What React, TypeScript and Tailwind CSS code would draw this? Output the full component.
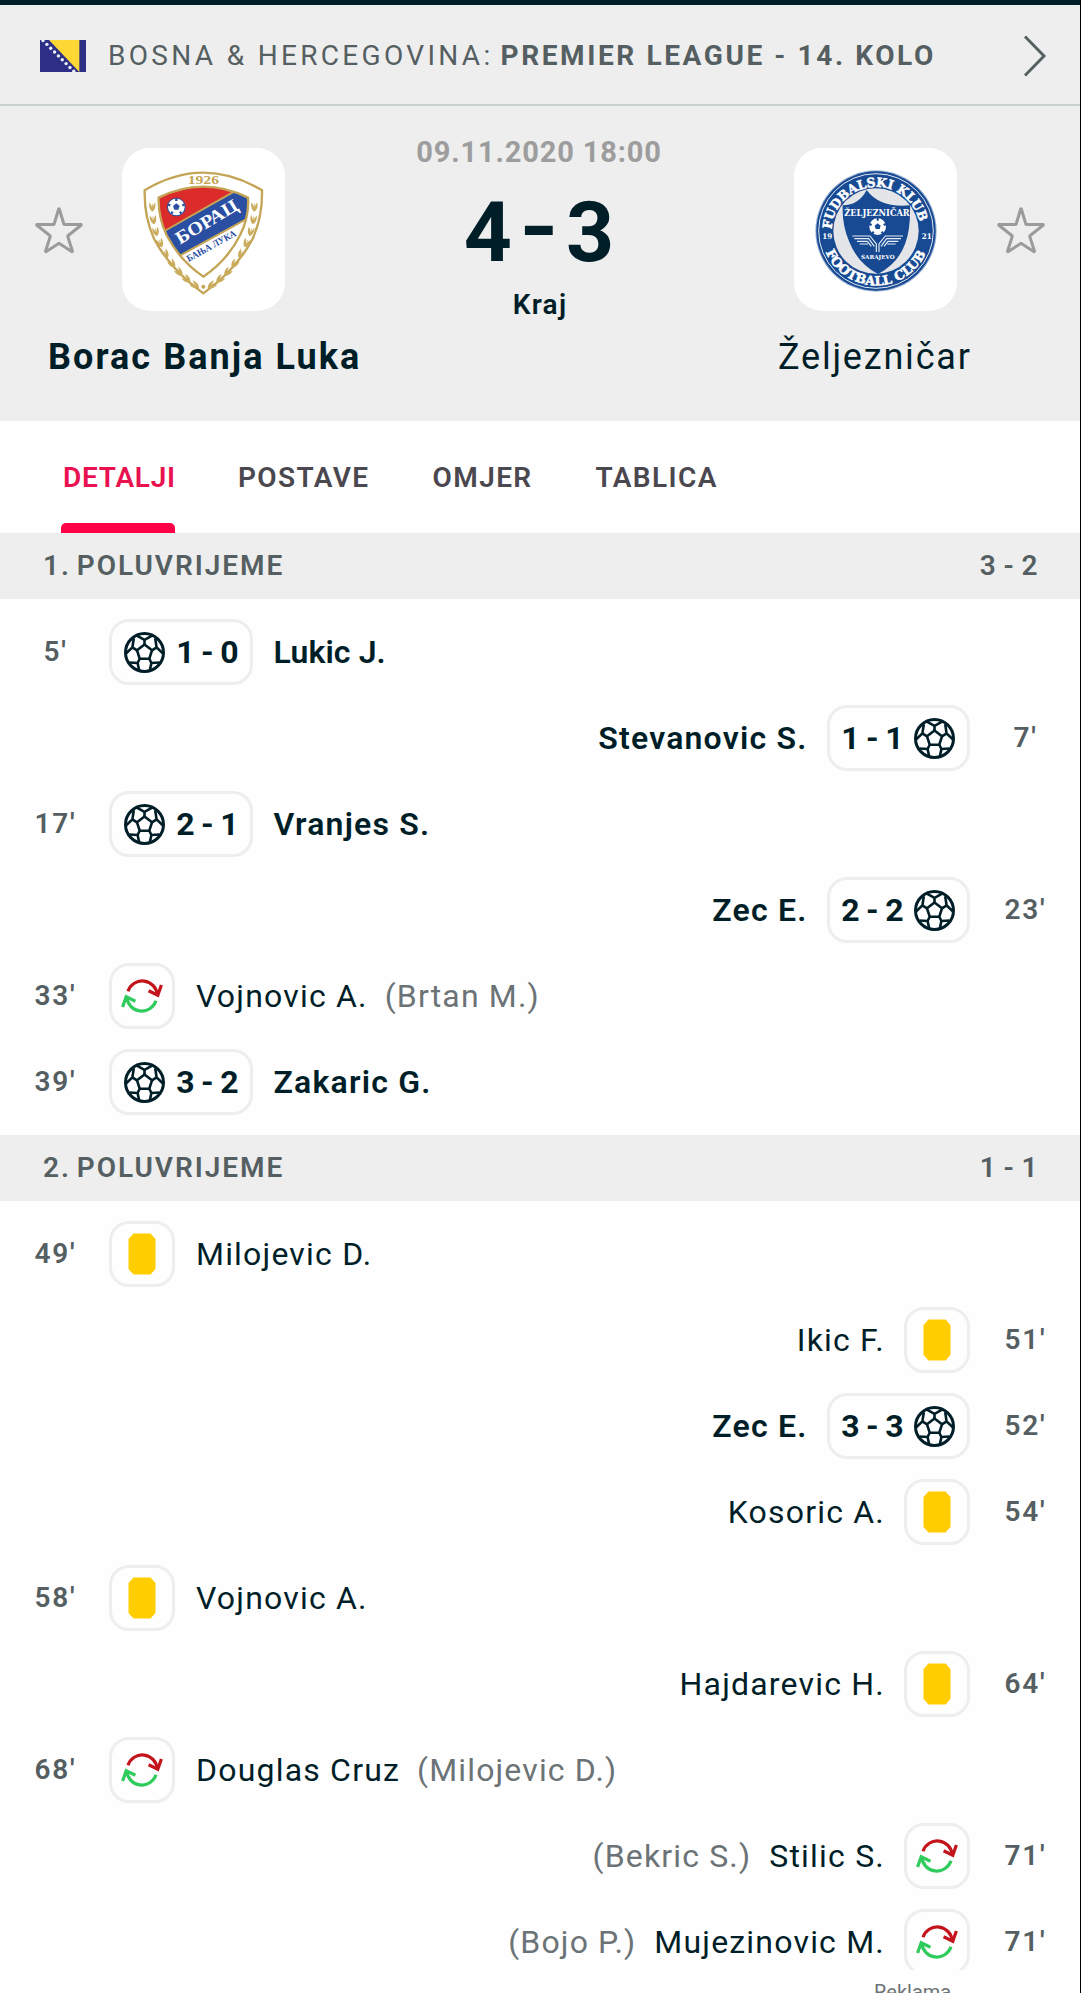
import type { ReactNode } from "react";

type MatchEvent = {
  minute: string;
  side: "home" | "away";
  kind: "goal" | "card" | "sub";
  player: string;
  score?: string;
  playerOut?: string;
  compact?: boolean;
};

const firstHalf: MatchEvent[] = [
  { minute: "5'", side: "home", kind: "goal", score: "1 - 0", player: "Lukic J.", compact: true },
  { minute: "7'", side: "away", kind: "goal", score: "1 - 1", player: "Stevanovic S." },
  { minute: "17'", side: "home", kind: "goal", score: "2 - 1", player: "Vranjes S." },
  { minute: "23'", side: "away", kind: "goal", score: "2 - 2", player: "Zec E." },
  { minute: "33'", side: "home", kind: "sub", player: "Vojnovic A.", playerOut: "Brtan M." },
  { minute: "39'", side: "home", kind: "goal", score: "3 - 2", player: "Zakaric G." },
];

const secondHalf: MatchEvent[] = [
  { minute: "49'", side: "home", kind: "card", player: "Milojevic D." },
  { minute: "51'", side: "away", kind: "card", player: "Ikic F." },
  { minute: "52'", side: "away", kind: "goal", score: "3 - 3", player: "Zec E." },
  { minute: "54'", side: "away", kind: "card", player: "Kosoric A." },
  { minute: "58'", side: "home", kind: "card", player: "Vojnovic A." },
  { minute: "64'", side: "away", kind: "card", player: "Hajdarevic H." },
  { minute: "68'", side: "home", kind: "sub", player: "Douglas Cruz", playerOut: "Milojevic D." },
  { minute: "71'", side: "away", kind: "sub", player: "Stilic S.", playerOut: "Bekric S." },
  { minute: "71'", side: "away", kind: "sub", player: "Mujezinovic M.", playerOut: "Bojo P." },
];

const tabs = ["DETALJI", "POSTAVE", "OMJER", "TABLICA"];

function Flag() {
  const stars = [0, 1, 2, 3, 4, 5, 6, 7, 8];
  return (
    <svg viewBox="0 0 46 32" className="h-8 w-[46px] shrink-0">
      <rect width="46" height="32" fill="#2c2f85" />
      <path d="M9 0H39.3V32Z" fill="#fdd835" />
      {stars.map((i) => (
        <circle key={i} cx={3 + i * 3.85} cy={0.5 + i * 3.85} r="1.7" fill="#eef0fa" />
      ))}
    </svg>
  );
}

function Star() {
  return (
    <svg viewBox="0 0 50 50" className="size-[50px] shrink-0" fill="none" stroke="#9b9b9b" strokeWidth="3" strokeLinejoin="bevel">
      <path d="M25 3L30 19.5H48L33.6 31L38.8 47.3L25 38.2L11.2 47.3L16.4 31L2 19.5H20Z" />
    </svg>
  );
}

function Ball() {
  return (
    <svg viewBox="0 0 41 41" className="size-[41px] shrink-0" fill="none" stroke="#001e28" strokeWidth="2.6" strokeLinejoin="round">
      <circle cx="20.5" cy="20.5" r="19" strokeWidth="3" />
      <path d="M20.5 12.5L28 18.3L25.3 26.7H15.7L13 18.3Z" />
      <path d="M20.5 12.5V7.8M20.5 7.8L12.4 3.4M20.5 7.8L28.6 3.4" />
      <path d="M13 18.3L8.4 15.4L9.8 6.3M8.4 15.4L2 21.5M28 18.3L32.6 15.4L31.2 6.3M32.6 15.4L39 21.5" />
      <path d="M15.7 26.7L13.6 31L15.2 38.5M13.6 31L5.4 30.5M25.3 26.7L27.4 31L25.8 38.5M27.4 31L35.6 30.5" />
    </svg>
  );
}

function Substitution() {
  return (
    <svg viewBox="0 0 42 34" className="h-[34px] w-[42px]" fill="none" strokeWidth="3.2">
      <g stroke="#c4141b">
        <path d="M7 12.2A15 15 0 0 1 36.2 16" />
        <path d="M27.6 11.8L36.8 16.2L40.4 6" />
      </g>
      <g stroke="#2fcb5c">
        <path d="M35 21.8A15 15 0 0 1 5.8 18" />
        <path d="M14.4 22.2L5.2 17.8L1.6 28" />
      </g>
    </svg>
  );
}

function YellowCard() {
  return (
    <svg viewBox="0 0 28 42" className="h-[42px] w-7">
      <path d="M5.5 0.5H22.5L27.5 6V36L22.5 41.5H5.5L0.5 36V6Z" fill="#ffcd00" />
    </svg>
  );
}

function BoracCrest() {
  const leaves = [
    [49, 142, 0],
    [52, 180, -8],
    [60, 216, -14],
    [73, 250, -22],
    [89, 282, -30],
    [109, 312, -36],
    [130, 337, -42],
    [153, 358, -48],
    [178, 376, -58],
  ];
  const wreath = leaves.map(([x, y, r]) => (
    <path
      key={y}
      transform={`translate(${x} ${y}) rotate(${r})`}
      d="M0 13Q-12 6 -9 -15Q-3 -8 -1 0V-11H1V0Q3 -8 9 -15Q12 6 0 13Z"
      fill="#c9ac5c"
    />
  ));
  return (
    <svg viewBox="0 0 408 420" className="h-[140px] w-[136px]">
      <defs>
        <clipPath id="borac-field">
          <path d="M202 80Q270 80 336 113Q340 170 312 226Q275 300 202 350Q130 300 92 226Q66 170 68 113Q134 80 202 80Z" />
        </clipPath>
      </defs>
      <path d="M202 38Q290 38 378 91Q380 170 350 236Q302 328 202 400Q102 328 54 236Q24 170 26 91Q114 38 202 38Z" fill="#fff" stroke="#c4a556" strokeWidth="7" />
      {wreath}
      <g transform="translate(404 0) scale(-1 1)">{wreath}</g>
      <circle cx="202" cy="380" r="6" fill="#c4a556" />
      <g clipPath="url(#borac-field)">
        <path d="M60 60H350V90L80 225H60Z" fill="#dc2b2b" />
        <path d="M80 216L306 88L350 110V167L126 290Z" fill="#2a4ea2" stroke="#c4a556" strokeWidth="6" />
      </g>
      <path d="M202 80Q270 80 336 113Q340 170 312 226Q275 300 202 350Q130 300 92 226Q66 170 68 113Q134 80 202 80Z" fill="none" stroke="#c4a556" strokeWidth="7" />
      <circle cx="121" cy="141" r="28" fill="#2a4ea2" />
      <circle cx="121" cy="141" r="25" fill="#fff" />
      <path d="M121 130L131 138L127 149H115L111 138Z" fill="#2a4ea2" />
      <path d="M121 115V123M146 134L139 136M136 161L132 155M106 161L110 155M96 134L103 136" stroke="#2a4ea2" strokeWidth="7" />
      <text x="202" y="71" textAnchor="middle" textLength="94" lengthAdjust="spacingAndGlyphs" fontSize="38" fontWeight="700" fill="#c4a556" className="font-['Liberation_Serif',serif]">
        1926
      </text>
      <text transform="translate(132 254) rotate(-31)" textLength="208" lengthAdjust="spacingAndGlyphs" fontSize="55" fontWeight="700" fill="#fff" className="font-['Liberation_Serif',serif]">
        БОРАЦ
      </text>
      <text transform="translate(158 306) rotate(-29)" textLength="165" lengthAdjust="spacingAndGlyphs" fontSize="29" fontWeight="700" fill="#2a4ea2" className="font-['Liberation_Serif',serif]">
        БАЊА ЛУКА
      </text>
    </svg>
  );
}

function ZeljoCrest() {
  return (
    <svg viewBox="0 0 408 408" className="size-[136px] font-['DejaVu_Serif',serif] font-bold" fill="#fff">
      <defs>
        <path id="zeljo-top" d="M72 224A133 133 0 1 1 336 224" />
        <path id="zeljo-bottom" d="M46 250A164 164 0 0 0 362 250" />
      </defs>
      <circle cx="204" cy="207" r="182" fill="#9fb4d6" />
      <circle cx="204" cy="207" r="179" fill="#174a93" />
      <circle cx="204" cy="207" r="172" fill="none" stroke="#dfe7f3" strokeWidth="3" />
      <circle cx="204" cy="207" r="128" fill="#e3e5e8" />
      <path d="M176 84Q215 138 306 130Q308 200 292 244Q270 305 210 336Q150 305 124 240Q102 190 104 130Q152 130 176 84Z" fill="#174a93" />
      <text fontSize="38" stroke="#fff" strokeWidth="1.5">
        <textPath href="#zeljo-top" startOffset="22" textLength="384" lengthAdjust="spacingAndGlyphs">
          FUDBALSKI KLUB
        </textPath>
      </text>
      <text fontSize="38" stroke="#fff" strokeWidth="1.5">
        <textPath href="#zeljo-bottom" startOffset="22" textLength="378" lengthAdjust="spacingAndGlyphs">
          FOOTBALL CLUB
        </textPath>
      </text>
      <text x="43" y="231" fontSize="23" textLength="30" lengthAdjust="spacingAndGlyphs">19</text>
      <text x="341" y="231" fontSize="23" textLength="30" lengthAdjust="spacingAndGlyphs">21</text>
      <text x="109" y="162" fontSize="27" textLength="196" lengthAdjust="spacingAndGlyphs">ŽELJEZNIČAR</text>
      <circle cx="209" cy="194" r="25" />
      <path d="M209 184L218 191L215 201H203L200 191Z" fill="#174a93" />
      <path d="M209 168V176M234 186L227 189M225 215L221 209M193 215L197 209M184 186L191 189" stroke="#174a93" strokeWidth="6" />
      <path
        d="M133 222H186L205 246V270M139 230H182L199 253M147 238H178L190 253M155 246H180M285 222H232L213 246V270M279 230H236L219 253M271 238H240L228 253M263 246H238M205 246V270M213 246V270"
        fill="none"
        stroke="#e9eef6"
        strokeWidth="3.5"
      />
      <text x="159" y="292" fontSize="17" textLength="101" lengthAdjust="spacingAndGlyphs">SARAJEVO</text>
    </svg>
  );
}

function CrestTile({ children }: { children: ReactNode }) {
  return <div className="flex size-[163px] shrink-0 items-center justify-center rounded-[28px] bg-white">{children}</div>;
}

function LeagueBar() {
  return (
    <div className="flex h-[101px] items-center border-b-2 border-[#ccd1d3] pl-[40px] pr-[33px] pt-[2px] text-[28px] text-[#555f62]">
      <Flag />
      <span className="ml-[22px] whitespace-pre tracking-[3.32px]">BOSNA &amp; HERCEGOVINA:</span>
      <span className="ml-[7px] whitespace-pre font-bold tracking-[2.6px]">PREMIER LEAGUE - 14. KOLO</span>
      <svg viewBox="0 0 24 42" className="ml-auto h-[42px] w-6" fill="none" stroke="currentColor" strokeWidth="2.9">
        <path d="M2 1.5L21 21L2 40.5" />
      </svg>
    </div>
  );
}

function MatchHeader() {
  return (
    <div className="grid h-[315px] grid-cols-[407px_1fr_409px] bg-[#eeeeee]">
      <div className="pt-[42px]">
        <div className="flex items-center pl-[34px]">
          <Star />
          <div className="ml-[38px]">
            <CrestTile>
              <BoracCrest />
            </CrestTile>
          </div>
        </div>
        <p className="mt-[22px] pl-[48px] text-[36px] font-bold leading-[48px] tracking-[2.05px]">Borac Banja Luka</p>
      </div>

      <div className="flex flex-col items-center pt-[26px]">
        <p className="whitespace-nowrap text-[29px] font-bold leading-10 tracking-[0.85px] text-[#9d9d9d]">09.11.2020 18:00</p>
        <div className="mt-[17px] flex items-center gap-[7px] text-[84px] font-bold leading-[88px]">
          <span>4</span>
          <span className="w-[40px] -translate-y-[5px] scale-x-120 text-center">-</span>
          <span>3</span>
        </div>
        <p className="mt-[8px] pl-[2px] text-[28px] font-semibold leading-10 tracking-[1.3px]">Kraj</p>
      </div>

      <div className="pt-[42px]">
        <div className="flex items-center pl-[123px]">
          <CrestTile>
            <ZeljoCrest />
          </CrestTile>
          <div className="ml-[39px]">
            <Star />
          </div>
        </div>
        <p className="mt-[22px] pl-[107px] text-[36px] leading-[48px] tracking-[1.8px]">Željezničar</p>
      </div>
    </div>
  );
}

function Tabs() {
  return (
    <nav className="flex h-[112px] gap-[63px] pl-[61px] text-[28px] font-semibold tracking-[1.4px] text-[#4a474e]">
      {tabs.map((tab, i) => (
        <div
          key={tab}
          className={
            i === 0
              ? "flex w-[114px] flex-col justify-between pl-[2px] tracking-[0.75px] text-[#e9114f]"
              : "flex flex-col justify-between"
          }
        >
          <span className="mt-[37px] leading-10">{tab}</span>
          {i === 0 ? <span className="-ml-[2px] h-[10px] rounded-t-[5px] bg-[#ff0046]" /> : null}
        </div>
      ))}
    </nav>
  );
}

function SectionHeader({ title, score }: { title: string; score: string }) {
  return (
    <div className="flex h-[66px] items-center justify-between bg-[#eeeeee] pl-[43px] pr-[42px] text-[28px] font-semibold text-[#555f62]">
      <span className="tracking-[1.95px] [word-spacing:-3px]">{title}</span>
      <span className="tracking-[0.4px]">{score}</span>
    </div>
  );
}

function IncidentBadge({ event }: { event: MatchEvent }) {
  const away = event.side === "away";
  if (event.kind === "goal") {
    return (
      <div
        className={[
          "flex h-[66px] w-[143.5px] shrink-0 items-center rounded-[20px] border-3 border-[#eeeeee] text-[32px] font-bold",
          away ? "flex-row-reverse pr-[12px]" : "pl-[12px]",
        ].join(" ")}
      >
        <Ball />
        <span className="w-[84px] shrink-0 text-center tracking-[-0.7px]">{event.score}</span>
      </div>
    );
  }
  return (
    <div className="flex size-[66px] shrink-0 items-center justify-center rounded-[20px] border-3 border-[#eeeeee]">
      {event.kind === "card" ? <YellowCard /> : <Substitution />}
    </div>
  );
}

function EventRow({ event }: { event: MatchEvent }) {
  const away = event.side === "away";
  return (
    <div className={["flex h-[86px] items-center text-[32px]", away ? "flex-row-reverse" : ""].join(" ")}>
      <span
        className={[
          "shrink-0 text-center text-[28px] font-semibold tracking-[1.8px] text-[#555f62]",
          away ? "w-[110px] pl-px" : "w-[109px] pl-[2px]",
        ].join(" ")}
      >
        {event.minute}
      </span>
      <IncidentBadge event={event} />
      <span
        className={[
          "whitespace-nowrap",
          away ? "mr-[19px]" : "ml-[21px]",
          event.kind === "goal" ? "font-semibold" : "",
          event.compact ? "tracking-[0.1px]" : "tracking-[1.2px]",
        ].join(" ")}
      >
        {event.player}
      </span>
      {event.playerOut ? (
        <span className={["whitespace-nowrap tracking-[1.15px] text-[#6b7376]", away ? "mr-[18px]" : "ml-[17px]"].join(" ")}>
          ({event.playerOut})
        </span>
      ) : null}
    </div>
  );
}

export default function App() {
  return (
    <div className="h-[1993px] w-full overflow-hidden border-r border-black bg-[#fefefe] font-['Roboto',sans-serif] text-[#001e28]">
      <div className="h-[1970px] overflow-hidden">
        <header className="border-t-[5px] border-[#001e28] bg-[#eeeeee]">
          <LeagueBar />
          <MatchHeader />
        </header>
        <Tabs />
        <SectionHeader title="1. POLUVRIJEME" score="3 - 2" />
        <div className="py-[10px]">
          {firstHalf.map((event, i) => (
            <EventRow key={i} event={event} />
          ))}
        </div>
        <SectionHeader title="2. POLUVRIJEME" score="1 - 1" />
        <div className="pt-[10px]">
          {secondHalf.map((event, i) => (
            <EventRow key={i} event={event} />
          ))}
        </div>
      </div>
      <p className="pl-[874px] pt-[10px] text-[20px] leading-6 text-[#6b7376]">Reklama</p>
    </div>
  );
}
